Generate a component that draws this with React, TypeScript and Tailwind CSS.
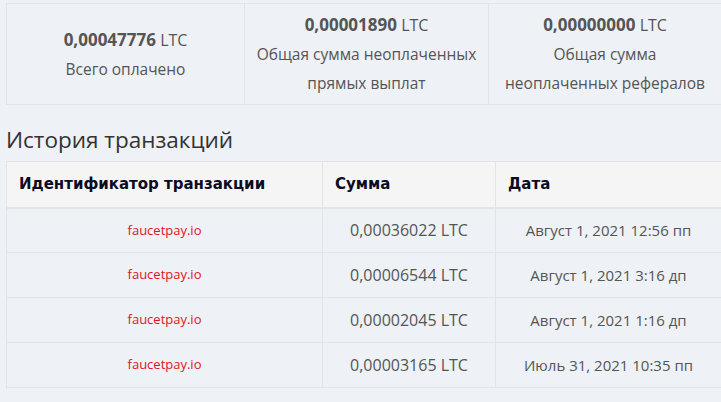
import React from "react";

const rows = [
  { id: "faucetpay.io", amount: "0,00036022 LTC", date: "Август 1, 2021 12:56 пп" },
  { id: "faucetpay.io", amount: "0,00006544 LTC", date: "Август 1, 2021 3:16 дп" },
  { id: "faucetpay.io", amount: "0,00002045 LTC", date: "Август 1, 2021 1:16 дп" },
  { id: "faucetpay.io", amount: "0,00003165 LTC", date: "Июль 31, 2021 10:35 пп" },
];

function Stat({ value, label, className }: { value: string; label: React.ReactNode; className: string }) {
  return (
    <div className={`flex flex-col items-center justify-center text-center ${className}`}>
      <div className="text-[16px] leading-[29px] text-[#555]">
        <span className="text-[17px] font-bold">{value}</span> LTC
      </div>
      <div className="text-[15.5px] leading-[29px] text-[#555]">{label}</div>
    </div>
  );
}

export default function App() {
  return (
    <div
      className="h-[402px] w-[721px] overflow-hidden bg-[#eef1f5]"
      style={{ fontFamily: "'Open Sans', 'Noto Sans', sans-serif" }}
    >
      <div className="ml-[6px] w-[716px] pt-[3px]">
        {/* Summary */}
        <div className="flex h-[102px] border border-[#e2e4e8]">
          <Stat className="w-[237px]" value="0,00047776" label="Всего оплачено" />
          <Stat
            className="w-[244px] border-l border-[#e2e4e8]"
            value="0,00001890"
            label={
              <>
                Общая сумма неоплаченных
                <br />
                прямых выплат
              </>
            }
          />
          <Stat
            className="flex-1 border-l border-[#e2e4e8]"
            value="0,00000000"
            label={
              <>
                Общая сумма
                <br />
                неоплаченных рефералов
              </>
            }
          />
        </div>

        <h2 className="mt-[20px] text-[22.5px] leading-[30px] text-[#333]">История транзакций</h2>

        {/* Transactions */}
        <table className="mt-[6px] w-[716px] table-fixed border-collapse">
          <thead>
            <tr
              className="h-[46px] bg-[#f5f5f5] text-left text-[15px] font-bold text-[#0b0b22]"
              style={{ fontFamily: "'DejaVu Sans', Verdana, sans-serif" }}
            >
              <th className="w-[316px] border border-b-2 border-[#e4e4e4] px-3">Идентификатор транзакции</th>
              <th className="w-[173px] border border-b-2 border-[#e4e4e4] px-3">Сумма</th>
              <th className="border border-b-2 border-[#e4e4e4] px-3">Дата</th>
            </tr>
          </thead>
          <tbody>
            {rows.map((r, i) => (
              <tr key={i} className="h-[45px] text-center">
                <td className="border border-[#e2e4e8] text-[13px] text-[#e0141e]">{r.id}</td>
                <td className="border border-[#e2e4e8] text-[16px] text-[#555]">{r.amount}</td>
                <td className="border border-[#e2e4e8] text-[15px] text-[#555]">{r.date}</td>
              </tr>
            ))}
          </tbody>
        </table>
      </div>
    </div>
  );
}
